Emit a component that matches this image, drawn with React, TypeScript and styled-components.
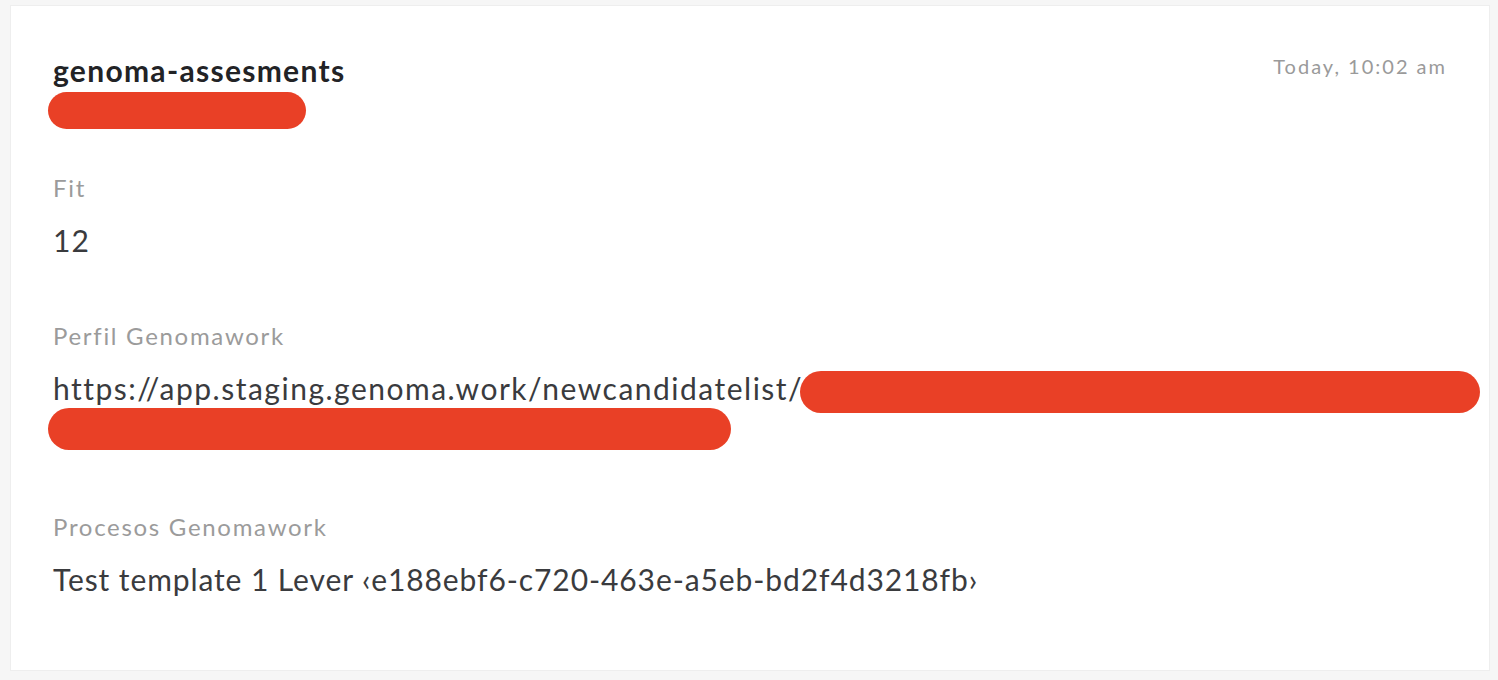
import React from "react";
import styled, { createGlobalStyle } from "styled-components";

const GlobalStyle = createGlobalStyle`
  html, body {
    margin: 0;
    padding: 0;
    background: #f6f6f6;
    font-family: Lato, "Open Sans", sans-serif;
  }
`;

const Page = styled.div`
  padding: 5px 8px 7px 10px;
`;

const Card = styled.div`
  background: #ffffff;
  border: 1px solid #eeeeee;
  height: 666px;
  box-sizing: border-box;
  padding: 44px 42px 0 42px;
`;

const Header = styled.div`
  display: flex;
  justify-content: space-between;
  align-items: flex-start;
`;

const Title = styled.h2`
  margin: 0;
  font-size: 30px;
  font-weight: 700;
  color: #222326;
  line-height: 40px;
  letter-spacing: 1.3px;
`;

const Timestamp = styled.span`
  font-size: 20px;
  color: #9a9a9a;
  line-height: 28px;
  margin-top: 2px;
  letter-spacing: 2px;
`;

const Redaction = styled.span<{ $width: number; $height?: number }>`
  display: inline-block;
  flex-shrink: 0;
  width: ${(p) => p.$width}px;
  height: ${(p) => p.$height ?? 38}px;
  border-radius: 21px;
  background: #e94026;
  vertical-align: middle;
`;

const SenderRow = styled.div`
  margin: 2px 0 0 -5px;
  line-height: 0;
`;

const Field = styled.div<{ $top: number }>`
  margin-top: ${(p) => p.$top}px;
`;

const Label = styled.div`
  font-size: 24px;
  color: #9b9b9b;
  line-height: 32px;
  letter-spacing: 1.7px;
`;

const Value = styled.div<{ $tracking?: number }>`
  font-size: 30px;
  color: #3a3b3e;
  line-height: 40px;
  margin-top: 16px;
  letter-spacing: ${(p) => p.$tracking ?? 1.2}px;
`;

const UrlLine = styled.div`
  display: flex;
  align-items: flex-start;
  white-space: nowrap;

  ${Redaction} {
    margin-top: 3px;
    margin-left: -3px;
  }
`;

const WrapRow = styled.div`
  margin: -5px 0 0 -5px;
  line-height: 0;
`;

export default function App() {
  return (
    <>
      <GlobalStyle />
      <Page>
        <Card>
          <Header>
            <div>
              <Title>genoma-assesments</Title>
              <SenderRow>
                <Redaction $width={258} $height={37} />
              </SenderRow>
            </div>
            <Timestamp>Today, 10:02 am</Timestamp>
          </Header>

          <Field $top={43}>
            <Label>Fit</Label>
            <Value>12</Value>
          </Field>

          <Field $top={60}>
            <Label>Perfil Genomawork</Label>
            <Value $tracking={1.5}>
              <UrlLine>
                https://app.staging.genoma.work/newcandidatelist/
                <Redaction $width={680} $height={42} />
              </UrlLine>
              <WrapRow>
                <Redaction $width={683} $height={42} />
              </WrapRow>
            </Value>
          </Field>

          <Field $top={61}>
            <Label>Procesos Genomawork</Label>
            <Value $tracking={0.9}>
              Test template 1 Lever ‹e188ebf6-c720-463e-a5eb-bd2f4d3218fb›
            </Value>
          </Field>
        </Card>
      </Page>
    </>
  );
}
